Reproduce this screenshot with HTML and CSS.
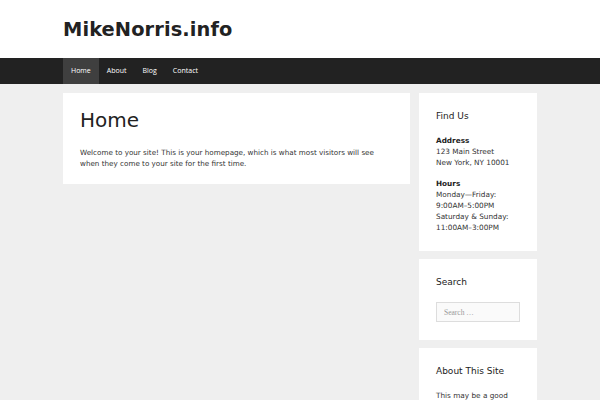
FILE: index.html
```html
<!DOCTYPE html>
<html>
<head>
<meta charset="utf-8">
<link rel="stylesheet" href="styles.css">
</head>
<body>
<header class="site-header">
  <div class="wrap"><h1 class="site-title">MikeNorris.info</h1></div>
</header>
<nav class="nav">
  <div class="wrap menu">
    <a class="item current">Home</a>
    <a class="item">About</a>
    <a class="item">Blog</a>
    <a class="item">Contact</a>
  </div>
</nav>
<div class="wrap content">
  <main class="main">
    <h2 class="page-title">Home</h2>
    <p class="intro">Welcome to your site! This is your homepage, which is what most visitors will see when they come to your site for the first time.</p>
  </main>
  <aside class="sidebar">
    <section class="widget">
      <h3 class="widget-title">Find Us</h3>
      <p class="wtext"><strong>Address</strong><br>123 Main Street<br>New York, NY 10001</p>
      <p class="wtext"><strong>Hours</strong><br>Monday—Friday:<br>9:00AM–5:00PM<br>Saturday &amp; Sunday:<br>11:00AM–3:00PM</p>
    </section>
    <section class="widget">
      <h3 class="widget-title search-title">Search</h3>
      <input class="search" type="text" placeholder="Search …">
    </section>
    <section class="widget">
      <h3 class="widget-title">About This Site</h3>
      <p class="wtext">This may be a good place to introduce yourself and your site or include some credits.</p>
    </section>
  </aside>
</div>
</body>
</html>
```
FILE: styles.css
```css
html, body { margin: 0; padding: 0; }
body {
  background: #efefef;
  font-family: "DejaVu Sans", Verdana, sans-serif;
  color: #333;
  overflow: hidden;
  height: 400px;
}
.wrap { width: 474px; margin: 0 auto; padding: 0 63px; box-sizing: content-box; }
.site-header { background: #fff; height: 58px; }
.site-header .wrap { display: flex; align-items: center; height: 58px; }
.site-title { margin: 0; font-size: 19.4px; font-weight: bold; color: #222; letter-spacing: 0.1px; }
.nav { background: #222; height: 26px; }
.menu { display: flex; height: 26px; }
.item { color: #fff; font-size: 7px; line-height: 26px; padding: 0 8px; font-family: "Open Sans", "DejaVu Sans", sans-serif; }
.item.current { background: #3f3f3f; }
.content { display: flex; align-items: flex-start; gap: 9px; padding-top: 9px; }
.main { background: #fff; width: 347px; box-sizing: border-box; padding: 16px 17px 15px; flex: none; }
.page-title { margin: 0 0 16px; font-size: 20px; font-weight: normal; color: #222; line-height: 22px; }
.intro { margin: 0; font-size: 7.2px; line-height: 11px; }
.sidebar { width: 118px; flex: none; display: flex; flex-direction: column; gap: 8px; }
.widget { background: #fff; padding: 17px 17px 18px; }
.widget-title { margin: 0 0 13px; font-size: 9px; font-weight: normal; color: #222; line-height: 12px; }
.widget-title.search-title { margin-bottom: 14px; }
.wtext { margin: 0 0 10px; font-size: 7.3px; line-height: 11px; }
.wtext:last-child { margin-bottom: 0; }
.wtext strong { color: #222; }
.search { display: block; width: 84px; height: 20px; box-sizing: border-box; border: 1px solid #ddd; background: #fafafa; font-family: "Liberation Serif", serif; font-size: 7.5px; padding: 0 7px; margin: 0; }
.search::placeholder { color: #999; }
```
